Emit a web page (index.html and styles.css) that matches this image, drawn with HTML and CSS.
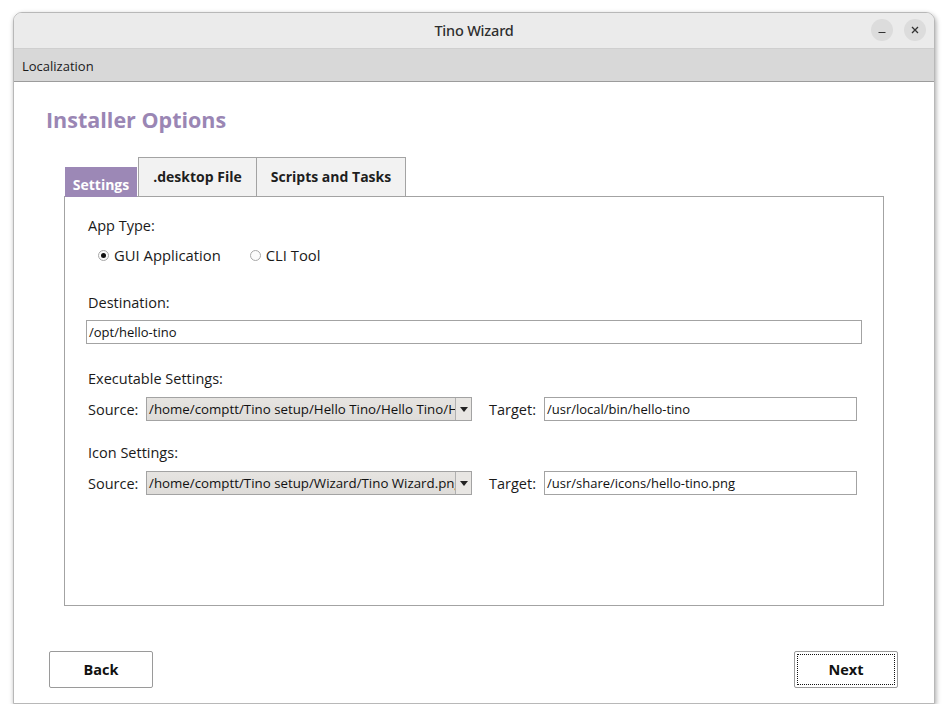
FILE: index.html
```html
<!DOCTYPE html>
<html>
<head>
<meta charset="utf-8">
<link rel="stylesheet" href="styles.css">
</head>
<body>
<div class="window">
  <div class="titlebar">
    <span class="title">Tino Wizard</span>
    <div class="wbtns">
      <span class="wbtn"><svg width="10" height="10" viewBox="0 0 10 10"><path d="M1.5 7.5h7" stroke="#333" stroke-width="1.2"/></svg></span>
      <span class="wbtn"><svg width="10" height="10" viewBox="0 0 10 10"><path d="M2 2l6 6M8 2l-6 6" stroke="#333" stroke-width="1.3"/></svg></span>
    </div>
  </div>
  <div class="menubar"><span class="menuitem">Localization</span></div>
  <div class="content">
    <h1 class="heading">Installer Options</h1>
    <div class="tabs">
      <div class="tab active">Settings</div>
      <div class="tab">.desktop File</div>
      <div class="tab">Scripts and Tasks</div>
    </div>
    <div class="panel">
      <div class="label l-app">App Type:</div>
      <div class="radios">
        <label class="radio"><span class="rdot checked"></span>GUI Application</label>
        <label class="radio"><span class="rdot"></span>CLI Tool</label>
      </div>
      <div class="label l-dest">Destination:</div>
      <div class="input wide">/opt/hello-tino</div>
      <div class="label l-exec">Executable Settings:</div>
      <div class="row">
        <span class="rlabel">Source:</span>
        <div class="combo"><span class="ctext">/home/comptt/Tino setup/Hello Tino/Hello Tino/Hello Tino</span><span class="carrow"><svg width="8" height="5" viewBox="0 0 8 5"><path d="M0 0h8L4 5z" fill="#222"/></svg></span></div>
        <span class="tlabel">Target:</span>
        <div class="input tgt">/usr/local/bin/hello-tino</div>
      </div>
      <div class="label l-icon">Icon Settings:</div>
      <div class="row">
        <span class="rlabel">Source:</span>
        <div class="combo"><span class="ctext">/home/comptt/Tino setup/Wizard/Tino Wizard.png</span><span class="carrow"><svg width="8" height="5" viewBox="0 0 8 5"><path d="M0 0h8L4 5z" fill="#222"/></svg></span></div>
        <span class="tlabel">Target:</span>
        <div class="input tgt">/usr/share/icons/hello-tino.png</div>
      </div>
    </div>
    <div class="buttons">
      <button class="btn">Back</button>
      <button class="btn focus"><span class="focusring">Next</span></button>
    </div>
  </div>
</div>
</body>
</html>
```

FILE: styles.css
```css
html, body {
  margin: 0;
  padding: 0;
  background: #ffffff;
  font-family: "Open Sans", "Noto Sans", sans-serif;
  color: #1a1a1a;
}
.window {
  margin: 12px 0 0 13px;
  width: 920px;
  height: 690px;
  border: 1px solid #b8b8b8;
  border-radius: 9px 9px 0 0;
  box-shadow: 1px 2px 5px rgba(0,0,0,0.35);
  display: flex;
  flex-direction: column;
  overflow: hidden;
  background: #fff;
}
.titlebar {
  height: 35px;
  background: #ebebeb;
  border-bottom: 1px solid #cfcfcf;
  position: relative;
  display: flex;
  align-items: center;
  justify-content: center;
  flex-shrink: 0;
}
.title {
  font-family: "Noto Sans", sans-serif;
  font-size: 14.5px;
  font-weight: 500;
  color: #2e2e2e;
  letter-spacing: -0.2px;
  margin-top: -2px;
}
.wbtns {
  position: absolute;
  right: 8px;
  top: 6px;
  display: flex;
  gap: 11px;
}
.wbtn {
  width: 22px;
  height: 22px;
  border-radius: 50%;
  background: #dcdcdc;
  display: flex;
  align-items: center;
  justify-content: center;
}
.menubar {
  height: 32px;
  background: #d8d8d8;
  border-bottom: 1px solid #9c9c9c;
  display: flex;
  align-items: center;
  flex-shrink: 0;
}
.menuitem {
  font-size: 13px;
  margin-left: 8px;
  color: #1a1a1a;
  padding-top: 1px;
}
.content {
  flex: 1;
  display: flex;
  flex-direction: column;
}
.heading {
  margin: 23px 0 0 32px;
  font-size: 21.5px;
  line-height: 30px;
  font-weight: 700;
  color: #9a86b4;
}
.tabs {
  margin: 22px 0 0 51px;
  display: flex;
  align-items: flex-end;
  height: 39px;
  position: relative;
  z-index: 1;
}
.tab {
  height: 39px;
  box-sizing: border-box;
  border: 1px solid #a3a3a3;
  border-bottom: none;
  background: #f2f2f2;
  font-size: 14px;
  font-weight: 700;
  color: #1e1e1e;
  display: flex;
  align-items: center;
  justify-content: center;
  padding-bottom: 2px;
}
.tab:nth-child(2) { width: 119px; margin-left: 1px; }
.tab:nth-child(3) { width: 149px; border-left: none; }
.tab.active {
  width: 72px;
  height: 30px;
  background: #9c88b6;
  border: none;
  color: #ffffff;
  padding-top: 4px;
  padding-bottom: 0;
  margin-bottom: -1px;
}
.panel {
  margin-left: 50px;
  width: 776px;
  height: 408px;
  border: 1px solid #a3a3a3;
  padding: 0 21px;
  box-sizing: content-box;
  display: flex;
  flex-direction: column;
  font-size: 14.5px;
}
.label {
  line-height: 20px;
  padding-left: 2px;
  color: #1a1a1a;
}
.l-app { margin-top: 19px; }
.l-dest { margin-top: 28px; }
.l-exec { margin-top: 25px; }
.l-icon { margin-top: 22px; }
.radios {
  margin-top: 9px;
  height: 20px;
  display: flex;
  align-items: center;
  padding-left: 12px;
  gap: 29px;
}
.radio {
  display: flex;
  align-items: center;
  gap: 5px;
  font-size: 14.8px;
}
.rdot {
  width: 9px;
  height: 9px;
  border: 1px solid #a8a8a8;
  border-radius: 50%;
  background: #fbfbfb;
  display: flex;
  align-items: center;
  justify-content: center;
}
.rdot.checked::after {
  content: "";
  width: 5px;
  height: 5px;
  border-radius: 50%;
  background: #111;
}
.input {
  height: 24px;
  box-sizing: border-box;
  border: 1px solid #a3a3a3;
  background: #fff;
  font-size: 13px;
  line-height: 22px;
  padding-left: 2px;
  color: #111;
  white-space: nowrap;
  overflow: hidden;
}
.input.wide {
  margin-top: 7px;
  width: 776px;
}
.row {
  margin-top: 8px;
  height: 24px;
  display: flex;
  align-items: center;
}
.rlabel {
  width: 60px;
  padding-left: 2px;
  box-sizing: border-box;
}
.combo {
  width: 326px;
  height: 24px;
  box-sizing: border-box;
  border: 1px solid #a3a3a3;
  background: linear-gradient(#e6e4e1, #dedcd9);
  display: flex;
  align-items: center;
}
.ctext {
  flex: 1;
  overflow: hidden;
  white-space: nowrap;
  font-size: 13.3px;
  padding-left: 2px;
  color: #111;
}
.carrow {
  width: 15px;
  height: 22px;
  border-left: 1px solid #b0b0b0;
  display: flex;
  align-items: center;
  justify-content: center;
  background: #e8e6e3;
}
.tlabel {
  margin-left: 17px;
  width: 55px;
}
.input.tgt {
  width: 313px;
}
.buttons {
  margin: 45px 36px 0 35px;
  display: flex;
  justify-content: space-between;
}
.btn {
  width: 104px;
  height: 37px;
  border: 1px solid #9a9a9a;
  border-radius: 2px;
  background: #fff;
  font-family: "Open Sans", "Noto Sans", sans-serif;
  font-size: 14.5px;
  font-weight: 700;
  color: #111;
  padding: 0;
  display: flex;
  align-items: center;
  justify-content: center;
}
.btn.focus { padding: 2px; }
.focusring {
  width: 100%;
  height: 100%;
  box-sizing: border-box;
  border: 1px dotted #111;
  display: flex;
  align-items: center;
  justify-content: center;
}
```
